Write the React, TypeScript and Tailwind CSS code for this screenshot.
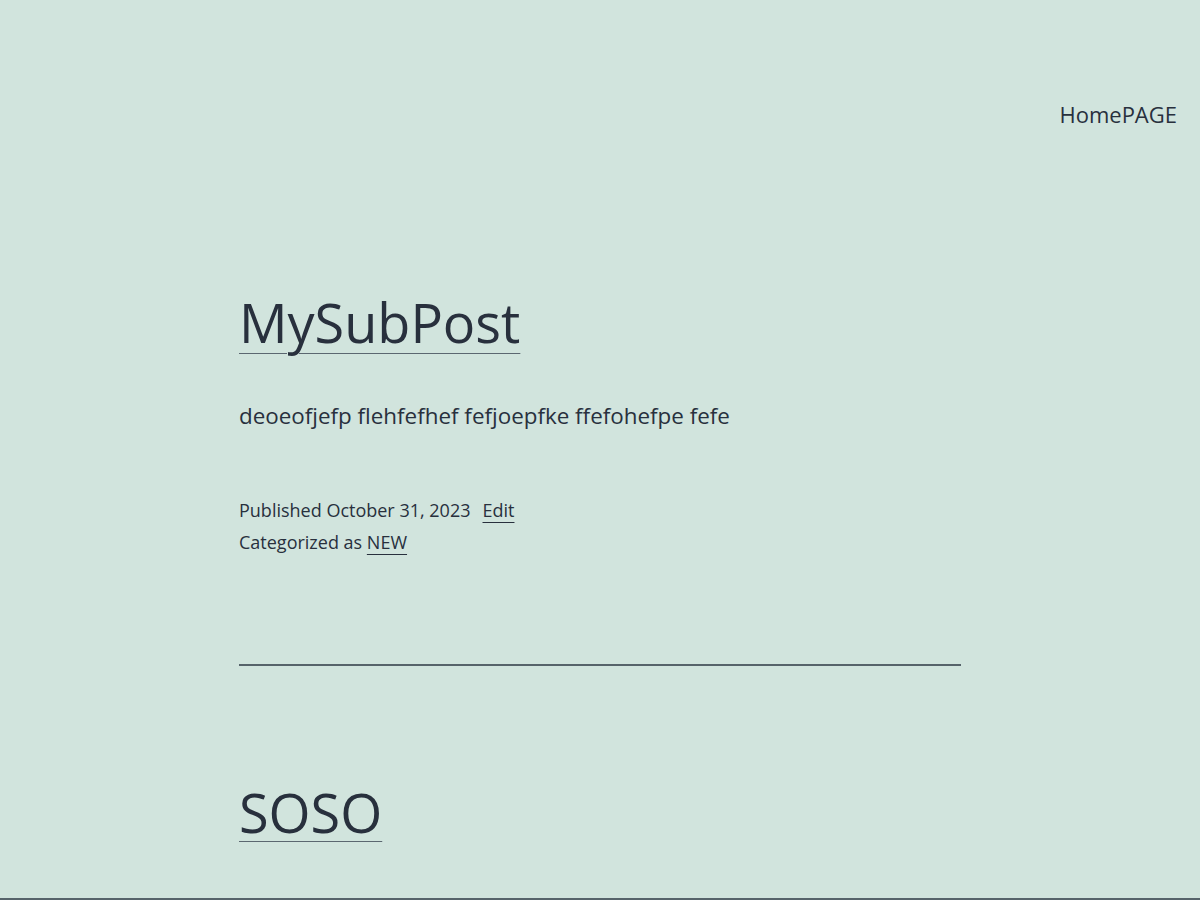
export default function App() {
  const font = { fontFamily: '"Open Sans", "Noto Sans", sans-serif' };
  return (
    <div className="h-[900px] w-[1200px] bg-[#d1e4dd] text-[#28303d] flex flex-col overflow-hidden" style={font}>
      <header className="flex justify-end pr-[23px] pt-[98px]">
        <a className="text-[22px] leading-[32px]">HomePAGE</a>
      </header>
      <main className="flex-1 pl-[239px] w-[961px]">
        <h2 className="mt-[159px] text-[54px] leading-[66px]">
          <a className="underline decoration-1 underline-offset-[10px] decoration-[#5b6770]">MySubPost</a>
        </h2>
        <p className="mt-[44px] text-[22.4px] leading-[33px]">deoeofjefp flehfefhef fefjoepfke ffefohefpe fefe</p>
        <div className="mt-[62px] text-[18px] leading-[32px]">
          <div>
            Published October 31, 2023<span className="ml-[12px] underline decoration-1 underline-offset-[5px]">Edit</span>
          </div>
          <div>
            Categorized as <span className="underline decoration-1 underline-offset-[5px]">NEW</span>
          </div>
        </div>
        <div className="mt-[106px] h-[2px] w-[722px] bg-[#56636a]" />
        <h2 className="mt-[113px] text-[54px] leading-[66px]">
          <a className="underline decoration-1 underline-offset-[8px] decoration-[#5b6770]">SOSO</a>
        </h2>
      </main>
      <div className="h-[2px] bg-[#56636a] shrink-0" />
    </div>
  );
}
